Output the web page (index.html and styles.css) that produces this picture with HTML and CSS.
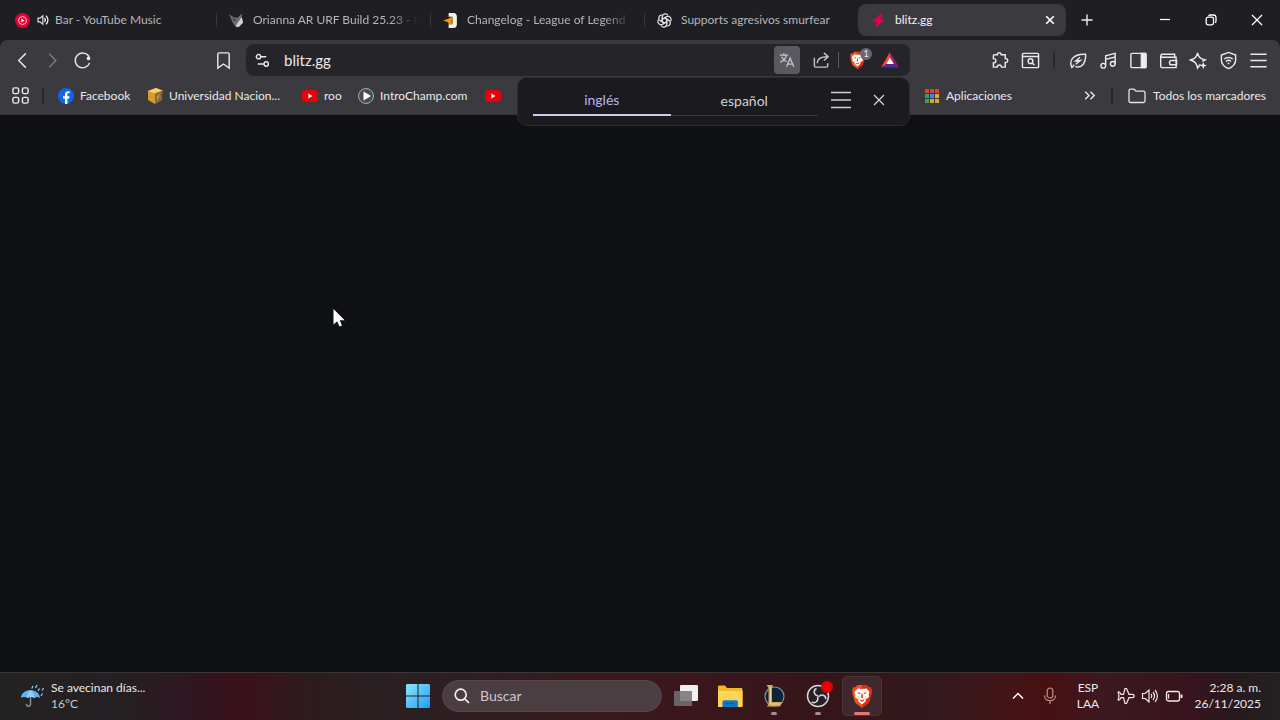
FILE: index.html
```html
<!DOCTYPE html>
<html lang="es">
<head>
<meta charset="utf-8">
<meta name="viewport" content="width=device-width, initial-scale=1">
<title>blitz.gg</title>
<link rel="stylesheet" href="styles.css">
</head>
<body>
<svg class="defs" aria-hidden="true">
  <defs>
    <symbol id="yt" viewBox="0 0 16 16"><rect y="2" width="16" height="12" rx="3.500" fill="#e8000d"/><path d="M6.300 5.500v5l4.200-2.500z" fill="#fff"/></symbol>
    <symbol id="lion" viewBox="0 0 20 24"><path d="M5.500 1h9l2 2.200 1.700-.1L20 6l-.7 2 .3 1.500-2.700 9.200L10 24l-6.900-5.300L.4 9.500.7 8 0 6l1.800-2.900 1.700.1z" fill="#f4501f"/><path d="M14.500 1l2 2.200 1.700-.1L20 6l-.7 2 .3 1.500-2.700 9.200L10 24V1z" fill="#dc2c14"/><path d="M5.500 4.500l4.500.5 4.500-.5L17.500 8l-.8 3 .3 2-3.500 2.500L14 17l-4 3.500L6 17l.5-1.500L3 13l.3-2-.8-3z" fill="#fff"/><path d="M5 8.300l3.500.5-.8 1.500zM15 8.300l-3.500.5.8 1.500zM9.500 9.500h1l.5 4-1 .8-1-.8zM5 12l2 1.500.5 1.500zM15 12l-2 1.500-.5 1.500zM7.500 15.300l2.500 1 2.500-1-1 1.700-1.500.8-1.500-.8z" fill="#e8391a"/></symbol>
  </defs>
</svg>

<div class="desktop">
  <header class="browser">
    <div class="tab-strip">
      <nav class="tabs" aria-label="Pestañas">
        <button class="tab">
          <svg class="favicon" viewBox="0 0 16 16"><circle cx="8" cy="8" r="8" fill="#e60035"/><circle cx="8" cy="8" r="4.200" fill="none" stroke="#ffd5dc" stroke-width="1"/><path d="M6.700 5.800v4.400L10.200 8z" fill="#fff"/></svg>
          <svg class="sound" viewBox="0 0 12 12"><path d="M1 4.200h2L5.800 1.800v8.400L3 7.800H1z" fill="none" stroke="#ddd" stroke-width="1.200"/><path d="M7.500 4c1 1.200 1 2.800 0 4M9 1.800c2.600 2.200 2.600 6.200 0 8.400" fill="none" stroke="#eee" stroke-width="1.300"/></svg>
          <span class="tab-title">Bar - YouTube Music</span>
        </button>
        <button class="tab">
          <svg class="favicon" viewBox="0 0 16 16"><path d="M0 1l5 3.500 4 .5 5-4.500L13.500 6l1 2.500L11 14l-3 1.500-3.500-4L3 8z" fill="#6e6e6e"/><path d="M13.500 4.500L9.500 10 8 12.500l-1 2 3.500.5 4.500-4.500-1-5z" fill="#d2d2d0"/><path d="M2 3l3 3.500 2.500.5L6 9z" fill="#39393b"/></svg>
          <span class="tab-title tab-title-fade">Orianna AR URF Build 25.23 - R</span>
        </button>
        <button class="tab">
          <svg class="favicon" viewBox="0 0 16 16"><path d="M6 0h5c3 0 3.800 2 3.800 4v8c0 2.500-1 4-3.800 4H6v-4h4V4H6z" fill="#f2f3ed"/><path d="M0 8l5-1.500L10 4v8l-4-.5-1-2z" fill="#f39a13"/><path d="M10 4v8l-2-3z" fill="#c26b0a"/></svg>
          <span class="tab-title tab-title-fade">Changelog - League of Legend</span>
        </button>
        <button class="tab">
          <svg class="favicon" viewBox="0 0 16 16" fill="none" stroke="#e2e2e2" stroke-width="1.300"><path d="M5.600 9.300V4.200c0-3.600 5-4.400 6.100-1.400M8 5.200l4.200 2.400"/><path d="M5.600 9.300V4.200c0-3.600 5-4.400 6.100-1.400M8 5.200l4.200 2.400" transform="rotate(60 8 8)"/><path d="M5.600 9.300V4.200c0-3.600 5-4.400 6.100-1.400M8 5.200l4.200 2.400" transform="rotate(120 8 8)"/><path d="M5.600 9.300V4.200c0-3.600 5-4.400 6.100-1.400M8 5.200l4.200 2.400" transform="rotate(180 8 8)"/><path d="M5.600 9.300V4.200c0-3.600 5-4.400 6.100-1.400M8 5.200l4.200 2.400" transform="rotate(240 8 8)"/><path d="M5.600 9.300V4.200c0-3.600 5-4.400 6.100-1.400M8 5.200l4.200 2.400" transform="rotate(300 8 8)"/></svg>
          <span class="tab-title">Supports agresivos smurfear</span>
        </button>
        <div class="tab tab-active">
          <svg class="favicon" viewBox="0 0 16 16"><path d="M10 1L1.500 8.500l4.500 1L4 14.500l3-.5 7.500-7L10 6l2.500-4z" fill="#e0004d"/></svg>
          <span class="tab-title">blitz.gg</span>
          <button class="tab-close" aria-label="Cerrar pestaña"><svg viewBox="0 0 10 10" width="10" height="10"><path d="M1.200 1.200l7.600 7.600M8.800 1.200L1.200 8.800" stroke="#fff" stroke-width="1.600"/></svg></button>
        </div>
      </nav>
      <button class="new-tab" aria-label="Nueva pestaña"><svg viewBox="0 0 12 12" width="12" height="12"><path d="M6 .5v11M.5 6h11" stroke="#eee" stroke-width="1.400"/></svg></button>
      <div class="window-buttons">
        <button aria-label="Minimizar"><svg viewBox="0 0 12 12" width="12" height="12"><path d="M1 5.500h10" stroke="#fff" stroke-width="1.200"/></svg></button>
        <button aria-label="Restaurar"><svg viewBox="0 0 12 12" width="12" height="12" fill="none" stroke="#fff" stroke-width="1.300"><rect x="1.200" y="3.200" width="7.300" height="7.600" rx="1.800"/><path d="M3.500 1.700C4 1.200 4.500 1 5.500 1h2.800C10 1 11 2 11 3.700v3c0 1-.2 1.500-.8 2"/></svg></button>
        <button aria-label="Cerrar"><svg viewBox="0 0 12 12" width="12" height="12"><path d="M1 1l10 10M11 1L1 11" stroke="#fff" stroke-width="1.300"/></svg></button>
      </div>
    </div>

    <div class="chrome">
      <div class="toolbar">
        <button class="tool" aria-label="Atrás"><svg viewBox="0 0 20 20"><path d="M13.500 2.500L6 10l7.500 7.500"/></svg></button>
        <button class="tool tool-dim" aria-label="Adelante"><svg viewBox="0 0 20 20"><path d="M6.500 3l7 7-7 7"/></svg></button>
        <button class="tool reload" aria-label="Recargar"><svg viewBox="0 0 20 20"><path d="M17.500 12.500A7.800 7.800 0 1 1 17 6.200"/><circle cx="16.300" cy="7.800" r="1.900" fill="#eee" stroke="none"/></svg></button>
        <button class="tool" aria-label="Guardar marcador"><svg viewBox="0 0 20 20"><path d="M5.300 2h9.400c.8 0 1.300.5 1.300 1.300V18l-6-4.300L4 18V3.300C4 2.500 4.500 2 5.300 2z"/></svg></button>
        <div class="address">
          <button class="tool" aria-label="Información del sitio"><svg viewBox="0 0 20 20"><circle cx="5.800" cy="6" r="2.300"/><path d="M8.100 6H14M5 13.700h6.400"/><circle cx="13.900" cy="13.700" r="2.300"/></svg></button>
          <input class="url" aria-label="Dirección" value="blitz.gg">
          <button class="translate" aria-label="Traducir"><svg viewBox="0 0 20 20" width="18" height="18" fill="none" stroke="#c7c7cb" stroke-width="1.400"><path d="M2 4.500h9M6.500 2.500v2M9.500 4.500C8.500 8 5.500 11 2.500 12.500M4 6.500c1.200 2.500 3.500 4.500 5.500 5.500M9.500 17.500l4-9.500 4 9.500M11 14.500h5"/></svg></button>
          <button class="tool share" aria-label="Compartir"><svg viewBox="0 0 20 20"><path d="M2.500 7v8.500c0 1 .5 1.500 1.500 1.500h11c1 0 1.500-.5 1.500-1.500V13M5.500 13c0-4.500 3.500-7 10.500-7M12.500 2l4.500 4-4.500 4"/></svg></button>
          <span class="address-rule"></span>
          <button class="shield" aria-label="Brave Shields"><svg viewBox="0 0 20 24" width="15" height="18"><use href="#lion"/></svg><span class="shield-count">1</span></button>
          <button class="bat" aria-label="Brave Rewards"><svg viewBox="0 0 18 16" width="18" height="16"><path d="M9 0L0 15.500 9 10z" fill="#ff4724"/><path d="M9 0l9 15.500L9 9z" fill="#9e1f63"/><path d="M0 15.500h18L9 10z" fill="#4e2b9e"/><path d="M9 5.500l3.800 6.500H5.200z" fill="#fff"/></svg></button>
        </div>
        <div class="actions">
          <button class="tool" aria-label="Extensiones"><svg viewBox="0 0 20 20"><path d="M3.500 4h3.200c-.5-3 4.500-3 4 0H15v4c3.500-.5 3.500 4.500 0 4v5h-4c0-3-4.500-3-4.500 0h-4v-4.500c3.500 0 3.500-4.500 0-4.500V5c0-.6.400-1 1-1z"/></svg></button>
          <button class="tool" aria-label="Buscar pestañas"><svg viewBox="0 0 20 20"><rect x="1.500" y="2.500" width="17" height="15" rx="1"/><path d="M2 5.800h16M11.800 12.500l2.400 2.400"/><circle cx="10" cy="10.700" r="2.500"/></svg></button>
          <span class="rule"></span>
          <button class="tool" aria-label="Ahorro de energía"><svg viewBox="0 0 20 20"><path d="M3 17c-3-6 0-14 14.500-13.500C18 12 14 18.500 6.500 16.500M2.500 18l3-3.500"/><path d="M11.500 6.500L7 10.500l5-.5-5 4"/></svg></button>
          <button class="tool" aria-label="Música"><svg viewBox="0 0 20 20"><circle cx="4.500" cy="15.500" r="2.500"/><circle cx="14.500" cy="13.500" r="2.500"/><path d="M7 15.500V5l10-2.500v11M7 8.800l10-2.500"/></svg></button>
          <button class="tool" aria-label="Barra lateral"><svg viewBox="0 0 20 20"><rect x="2" y="2.500" width="16" height="15" rx="1"/><path d="M13 2.500h4.500v15H13z" fill="#eee"/></svg></button>
          <button class="tool" aria-label="Cartera"><svg viewBox="0 0 20 20"><path d="M16.500 7V3.500H3C1.700 3.500 1.700 6.500 3 6.500h15v11H3.500c-1 0-1.700-.7-1.700-1.700V5M18.500 10H13c-2.600 0-2.600 4.500 0 4.500h5.500z"/></svg></button>
          <button class="tool" aria-label="Asistente Leo"><svg viewBox="0 0 20 20"><path d="M12 14l-3 4c-1-5-2.500-7-7.500-8.500C6.500 8 8 6.500 9 2c1 4.500 2.500 6 8 7.500l-3 1.500"/><path d="M15 11.500l1 2.800 2.800 1-2.800 1-1 2.800-1-2.800-2.800-1 2.800-1z" fill="#eee" stroke="none"/></svg></button>
          <button class="tool" aria-label="VPN"><svg viewBox="0 0 20 20"><path d="M10 1.500l7.500 2.700v5.300c0 4.500-3 7.200-7.500 9-4.500-1.800-7.500-4.500-7.500-9V4.200z"/><path d="M5.500 8.500c2.500-2.300 6.500-2.300 9 0M7.300 11c1.500-1.400 3.900-1.400 5.400 0"/><circle cx="10" cy="13" r="1" fill="#eee" stroke="none"/></svg></button>
          <button class="tool" aria-label="Menú"><svg viewBox="0 0 20 20"><path d="M1.500 3.500h17M1.500 10h17M1.500 16.500h17"/></svg></button>
        </div>
      </div>

      <nav class="bookmarks" aria-label="Marcadores">
        <button class="tool" aria-label="Grupos de pestañas"><svg viewBox="0 0 20 20"><rect x="2" y="2" width="6" height="6" rx="1.800"/><rect x="12" y="2" width="6" height="6" rx="1.800"/><rect x="2" y="12" width="6" height="6" rx="1.800"/><rect x="12" y="12" width="6" height="6" rx="1.800"/></svg></button>
        <span class="rule"></span>
        <div class="bookmark-list">
          <a class="bookmark" href="#"><svg viewBox="0 0 16 16"><circle cx="8" cy="8" r="8" fill="#1264e8"/><path d="M7 16v-5.500H5V8.200h2V6.500c0-2.200 1.200-3.300 3.200-3.300l1.500.1v2h-1c-1 0-1.300.5-1.300 1.200v1.700h2.200l-.4 2.300H9.400V16z" fill="#fff"/></svg>Facebook</a>
          <a class="bookmark" href="#"><svg viewBox="0 0 16 16"><path d="M1 3l8-3 6.500 2.500L14.500 12 8 16 1 12z" fill="#d99b2b"/><path d="M1 3l8-3 6.500 2.500L8 5.500z" fill="#f5cf6b"/><path d="M8 5.500l7.500-3-1 9.500L8 16z" fill="#8a6a32"/><path d="M12.500 5l-2 4v4z" fill="#e9d2a0"/></svg>Universidad Nacion...</a>
          <a class="bookmark" href="#"><svg viewBox="0 0 16 16"><use href="#yt"/></svg>roo</a>
          <a class="bookmark" href="#"><svg viewBox="0 0 16 16"><circle cx="8" cy="8" r="7.500" fill="#4c4c4e" stroke="#aaa"/><path d="M5.500 3.500v9l7.500-4.500z" fill="#fff"/></svg>IntroChamp.com</a>
          <a class="bookmark" href="#" aria-label="YouTube"><svg viewBox="0 0 16 16"><use href="#yt"/></svg></a>
          <a class="bookmark" href="#"><svg viewBox="0 0 16 16"><path d="M1 1h4v4H1zM6 1h4v4H6zM11 1h4v4h-4z" fill="#d8433c"/><path d="M1 6h4v4H1z" fill="#2da657"/><path d="M6 6h4v4H6z" fill="#4285e8"/><path d="M11 6h4v4h-4z" fill="#e0ab2a"/><path d="M1 11h4v4H1z" fill="#2da657"/><path d="M6 11h4v4H6zM11 11h4v4h-4z" fill="#d5a92f"/></svg>Aplicaciones</a>
        </div>
        <button class="tool" aria-label="Más marcadores"><svg viewBox="0 0 20 20"><path d="M5.500 6l4 4-4 4M11 6l4 4-4 4"/></svg></button>
        <span class="rule"></span>
        <a class="bookmark all" href="#"><svg viewBox="0 0 18 16" fill="none" stroke="#e5e5e5" stroke-width="1.300"><path d="M1 13V2.700C1 1.700 1.500 1.200 2.500 1.200H6l2 2h7.500c1 0 1.500.5 1.500 1.500V13c0 1-.5 1.500-1.500 1.500h-13C1.500 14.500 1 14 1 13z"/></svg>Todos los marcadores</a>
      </nav>
    </div>

    <div class="translate-popup" role="dialog" aria-label="Traducir página">
      <button class="lang lang-active">inglés</button>
      <button class="lang">español</button>
      <button class="popup-menu" aria-label="Opciones"><svg viewBox="0 0 20 18" width="20" height="18"><path d="M0 1.500h20M0 9h20M0 16.500h20" stroke="#d0d0d3" stroke-width="1.500"/></svg></button>
      <button class="popup-close" aria-label="Cerrar"><svg viewBox="0 0 12 12" width="12" height="12"><path d="M1 1l10 10M11 1L1 11" stroke="#d5d5d8" stroke-width="1.300"/></svg></button>
    </div>
  </header>

  <main class="page"></main>

  <footer class="taskbar">
    <button class="weather">
      <svg viewBox="0 0 24 24" width="24" height="24"><path d="M10.500 10v10c0 3-4 3-4 0" fill="none" stroke="#8b8b8e" stroke-width="1.500"/><path d="M1 14C1 3.500 19.500 3.500 20 14c-2-1.500-4-1.500-5.500 0-2-1.500-5.500-1.500-7.500 0-2-1.500-4-1.500-6 0z" fill="#62b1ef"/><path d="M7 14c0-4 1.500-7 3.500-8 2.500 1.500 4 4.500 4 8-2-1.500-5.500-1.500-7.500 0z" fill="#91ccfa"/><path d="M13 2l-1.300 2.500M17 1l-1.500 3M19.500 4.500L18 7M23.500 4L22 6.500M22.500 9.500L21 12" stroke="#8fc6ec" stroke-width="1.300"/></svg>
      <span class="weather-text"><span>Se avecinan días...</span><span class="soft">16°C</span></span>
    </button>
    <div class="apps">
      <button class="app" aria-label="Inicio"><svg viewBox="0 0 24 24" width="24" height="24"><defs><linearGradient id="win" x2="1" y2="1"><stop stop-color="#8be8fb"/><stop offset="1" stop-color="#1e9df5"/></linearGradient></defs><path d="M0 1l1-1h10.500v11.500H0zM12.500 0H23l1 1v10.500H12.500zM0 12.500h11.500V24H1l-1-1zM12.500 12.500H24V23l-1 1H12.500z" fill="url(#win)"/></svg></button>
      <label class="search"><svg viewBox="0 0 16 16" width="16" height="16" fill="none" stroke="#eee" stroke-width="1.700"><circle cx="6.700" cy="6.700" r="5.500"/><path d="M10.800 10.800L15 15"/></svg><input type="search" aria-label="Buscar" placeholder="Buscar"></label>
      <button class="app" aria-label="Vista de tareas"><svg viewBox="0 0 24 24" width="24" height="24"><rect x="6" y="1" width="18" height="16" rx="1" fill="#efefef"/><rect x="0" y="7" width="18" height="15" rx="1" fill="#747174" fill-opacity=".85"/></svg></button>
      <button class="app" aria-label="Explorador"><svg viewBox="0 0 26 24" width="26" height="24"><path d="M1 3c0-1 .5-1.500 1.500-1.500H8l2 2.500h14c1 0 1.500.5 1.500 1.500V22H1z" fill="#f0b929"/><path d="M1 7h24.500v16H1z" fill="#fbd558"/><path d="M5.500 23v-5c0-1 .7-1.700 1.700-1.700h12c1 0 1.700.7 1.700 1.700v5z" fill="#1377c9"/><path d="M9 19.500h8.500" stroke="#0b559c" stroke-width="1.200"/></svg></button>
      <button class="app" aria-label="League of Legends"><svg viewBox="0 0 24 24" width="24" height="24"><circle cx="12.500" cy="12.500" r="9.500" fill="#0c2638" stroke="#7a9295" stroke-width="1.200"/><path d="M4.500 1H11l-1 3v14h10.500l-2.500 4.500H5l1.500-3V4z" fill="#d0a65a"/><path d="M8.500 3v17h9" stroke="#f0d59a" fill="none"/></svg><span class="running"></span></button>
      <button class="app" aria-label="OBS Studio"><svg viewBox="0 0 24 24" width="24" height="24"><circle cx="12" cy="12" r="10.500" fill="#242126" stroke="#d7d7d7" stroke-width="1.500"/><g fill="none" stroke="#d7d7d7" stroke-width="1.500"><path d="M12 12c-4.500-1-5-6-1.500-7.500"/><path d="M12 12c-4.500-1-5-6-1.500-7.500" transform="rotate(120 12 12.500)"/><path d="M12 12c-4.500-1-5-6-1.500-7.500" transform="rotate(240 12 12.500)"/></g></svg><span class="record"></span><span class="running"></span></button>
      <button class="app app-active" aria-label="Brave"><svg viewBox="0 0 20 24" width="20" height="24"><use href="#lion"/></svg><span class="running"></span></button>
    </div>
    <div class="tray">
      <button class="tray-button" aria-label="Iconos ocultos"><svg viewBox="0 0 12 12" width="12" height="12"><path d="M1 8.500l5-5 5 5" fill="none" stroke="#fff" stroke-width="1.500"/></svg></button>
      <button class="tray-button" aria-label="Micrófono"><svg viewBox="0 0 14 18" width="14" height="18" fill="none" stroke="#c58f8a" stroke-width="1.200"><rect x="4.200" y="1" width="5.600" height="10" rx="2.800"/><path d="M1.500 8.500c0 7 11 7 11 0M7 13.800V17"/></svg></button>
      <button class="language"><span>ESP</span><span>LAA</span></button>
      <button class="status" aria-label="Red, volumen y batería">
        <svg viewBox="0 0 18 18" width="18" height="18" fill="none" stroke="#f5e9ea" stroke-width="1.200"><path d="M6.500 7.300L8 1.500h1.500L12 7.300h3.500c2.200 0 2.200 3.400 0 3.400H12l-2.500 5.800H8l-1.500-5.800H4L2.500 13H1.200l.8-4-.8-4h1.300L4 7.300z"/></svg>
        <svg viewBox="0 0 18 18" width="18" height="18" fill="none" stroke="#f5e9ea" stroke-width="1.200"><path d="M1.500 6.500h2.700L8 3v12l-3.800-3.500H1.500zM10 7c1 1 1 3 0 4M12 5c2 2.200 2 5.800 0 8M14 3c3.200 3.300 3.200 8.700 0 12"/></svg>
        <svg viewBox="0 0 18 18" width="18" height="18" fill="none" stroke="#f5e9ea" stroke-width="1.300"><rect x="1.500" y="4.500" width="13" height="9.500" rx="2"/><path d="M16.500 7.500v3.500" stroke-width="2"/><path d="M3.500 7v4.500"/></svg>
      </button>
      <button class="clock"><span>2:28 a. m.</span><span>26/11/2025</span></button>
    </div>
  </footer>

  <svg class="pointer" viewBox="0 0 12 20" width="12" height="20" aria-hidden="true"><path d="M.5 1v15.500l3.700-3.300 2.300 5.300 2.500-1-2.300-5.200h5z" fill="#fff"/></svg>
</div>
</body>
</html>
```
FILE: styles.css
```css
* { box-sizing: border-box; }
body { margin: 0; background: #0f1014; color: #e9e9eb; font: 12px/16px Lato, "Open Sans", sans-serif; }
button, input { font: inherit; color: inherit; background: none; border: 0; padding: 0; margin: 0; }
button { display: flex; align-items: center; justify-content: center; flex: none; }
input { min-width: 0; outline: 0; }
a { color: inherit; text-decoration: none; }
svg { display: block; flex: none; }
.defs { position: absolute; width: 0; height: 0; }

.desktop { position: relative; min-height: 100vh; display: flex; flex-direction: column; overflow: hidden; }
.browser { position: relative; background: #1f1e23; }

.tab-strip { display: flex; align-items: center; height: 40px; }
.tabs { display: flex; flex: 0 1 1066px; min-width: 0; padding-left: 2px; }
.tab { position: relative; display: flex; align-items: center; justify-content: flex-start; flex: 1 1 0; min-width: 0; height: 32px; padding: 0 12px 0 13px; color: #b5b5b8; }
.tab:not(.tab-active)::after { content: ""; position: absolute; right: -1px; top: 9px; height: 14px; width: 1px; background: #39383d; }
.tab:nth-child(4)::after { display: none; }
.favicon { width: 15px; height: 15px; margin-right: 9px; }
.sound { width: 12px; height: 12px; margin-right: 6px; margin-left: -2px; }
.tab-title { flex: 1; min-width: 0; overflow: hidden; white-space: nowrap; text-align: left; }
.tab-title-fade { -webkit-mask-image: linear-gradient(to right, #000 calc(100% - 28px), transparent); mask-image: linear-gradient(to right, #000 calc(100% - 28px), transparent); }
.tab-active { background: #3b3a3f; border-radius: 8px; color: #f3f3f4; padding-right: 6px; }
.tab-close { width: 20px; height: 20px; }
.new-tab { width: 42px; height: 32px; }
.window-buttons { display: flex; margin-left: auto; }
.window-buttons button { width: 46px; height: 40px; }

.chrome { background: #3b3a3e; border-radius: 8px 8px 0 0; border-bottom: 1px solid #343438; }
.toolbar { display: flex; align-items: center; height: 40px; padding: 0 7px; }
.tool { width: 30px; height: 30px; }
.tool svg { width: 19px; height: 19px; fill: none; stroke: #e9e9eb; stroke-width: 1.5; }
.tool-dim svg { stroke: #7c7b80; }
.reload { margin-right: 111px; }
.address { flex: 1; min-width: 0; display: flex; align-items: center; height: 32px; margin-left: 8px; padding-left: 1px; padding-right: 7px; background: #252429; border-radius: 8px; }
.url { flex: 1; font-size: 15px; line-height: 20px; padding-left: 7px; }
.translate { width: 26px; height: 28px; border-radius: 4px; background: #5a595f; }
.share { margin-left: 6px; }
.share svg { stroke: #c5c5c9; }
.address-rule { width: 1px; height: 16px; margin-left: 2px; margin-right: 3px; background: #5b5a60; }
.shield { position: relative; width: 30px; height: 28px; }
.shield-count { position: absolute; top: 2px; right: 0; width: 12px; height: 12px; border-radius: 6px; background: #676a76; font-size: 9px; line-height: 12px; }
.bat { width: 26px; height: 28px; margin-left: 5px; }
.actions { display: flex; align-items: center; margin-left: 75px; }
.rule { width: 2px; height: 16px; margin: 0 8px; background: #29282c; }

.bookmarks { display: flex; align-items: center; height: 34px; padding: 0 14px 3px 5px; }
.bookmarks .rule { margin: 0 7px; }
.bookmark-list { display: grid; grid-template-columns: 89px 155px 56px 127px 439px auto; flex: 1; padding-left: 7px; }
.bookmark { display: flex; align-items: center; gap: 6px; white-space: nowrap; }
.bookmark svg { width: 16px; height: 16px; }
.bookmark.all { gap: 7px; padding-left: 8px; }
.bookmark.all svg { width: 18px; }

.translate-popup { position: absolute; top: 77px; left: 517px; width: 393px; height: 49px; z-index: 2; display: flex; align-items: flex-start; padding: 6px 15px 0; border: 1px solid #2c2b30; border-radius: 10px; background: #1b1a1f; }
.lang { flex: 147px 1 1; height: 32px; color: #cfcfd2; border-bottom: 1px solid #39383e; font-size: 14px; padding-top: 2px; }
.lang-active { flex-basis: 137px; color: #b9b6ee; border-bottom: 2px solid #cdcaf5; }
.popup-menu { width: 46px; height: 32px; }
.popup-close { width: 30px; height: 32px; }

.page { flex: 1; background: #0f1014; }

.taskbar { display: grid; grid-template-columns: 1fr auto 1fr; align-items: center; height: 48px; padding-bottom: 1px; border-top: 1px solid #3b3638; background: linear-gradient(to right, #232223 0%, #251f22 10%, #301621 15%, #3b111b 19%, #2d1b1d 24%, #2a2022 30%, #321d20 40%, #3b171c 52%, #35151a 65%, #32191d 73%, #431416 79%, #471012 82%, #3c1820 86%, #38131d 93%, #28191e 96%, #222122 100%); }
.weather { justify-self: start; gap: 7px; padding-left: 20px; }
.weather-text { display: flex; flex-direction: column; align-items: flex-start; }
.soft { color: #c8c8ca; }
.apps { display: flex; align-items: center; gap: 4px; }
.app { position: relative; width: 40px; height: 40px; border-radius: 5px; }
.app-active { background: #3f272b; border: 1px solid #49343a; }
.running { position: absolute; bottom: 1px; left: 17px; width: 6px; height: 3px; border-radius: 2px; background: #a29094; }
.app-active .running { left: 11px; bottom: 0; width: 16px; background: #ec7475; }
.record { position: absolute; top: 5px; right: 5px; width: 12px; height: 12px; border-radius: 6px; background: #e60006; }
.search { display: flex; align-items: center; gap: 10px; width: 220px; height: 32px; padding: 0 11px; border-radius: 16px; background: #4a3e42; border: 1px solid #55484b; font-size: 14px; line-height: 20px; }
.search input { flex: 1; }
.search input::placeholder { color: #d0c8ca; opacity: 1; }
.tray { display: flex; align-items: center; justify-content: flex-end; padding-right: 19px; }
.tray-button { width: 32px; height: 40px; }
.language { flex-direction: column; width: 44px; }
.status { gap: 6px; padding: 0 7px; }
.clock { flex-direction: column; align-items: flex-end; width: 71px; }

.pointer { position: absolute; left: 333px; top: 308px; z-index: 3; }
```
